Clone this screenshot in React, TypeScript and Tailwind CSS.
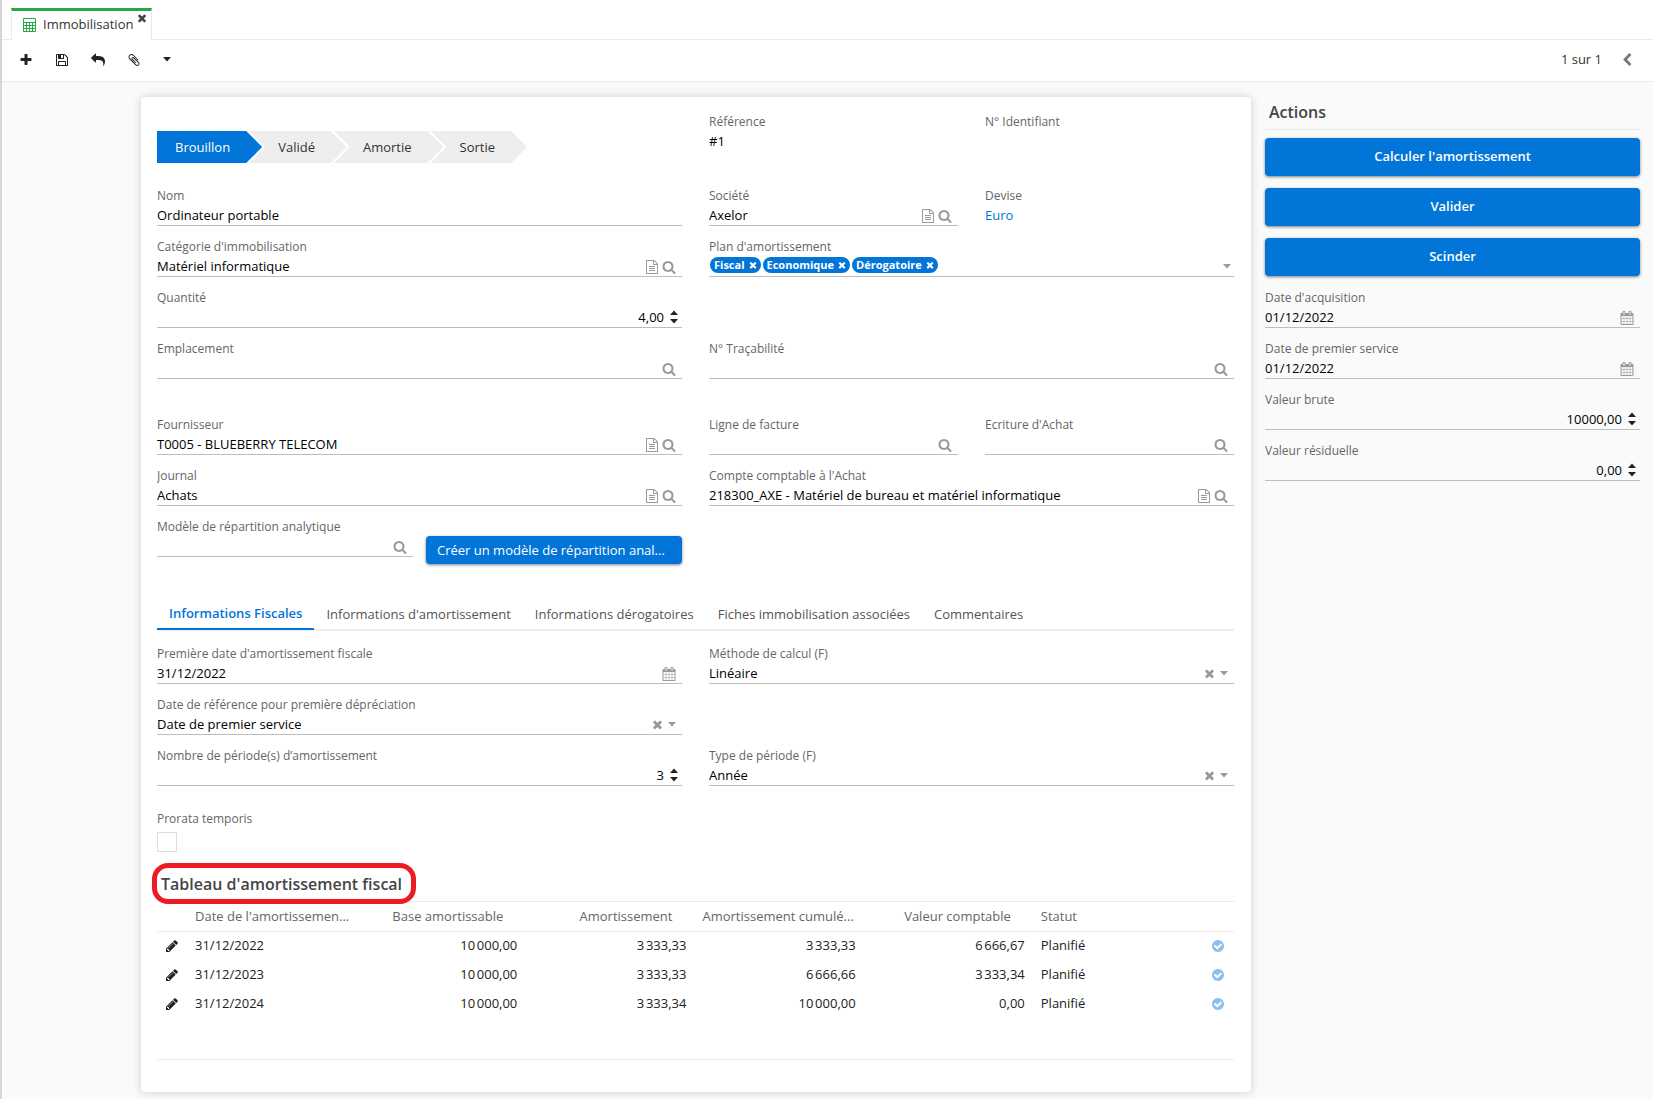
import { useId, useState, type ReactNode } from "react";

const PATHS = {
  plus: "M1600 736v192q0 40-28 68t-68 28h-416v416q0 40-28 68t-68 28h-192q-40 0-68-28t-28-68v-416h-416q-40 0-68-28t-28-68v-192q0-40 28-68t68-28h416v-416q0-40 28-68t68-28h192q40 0 68 28t28 68v416h416q40 0 68 28t28 68z",
  save: "M512 1536h768v-384h-768v384zm896 0h128v-896q0-14-10-38.5t-20-34.5l-281-281q-10-10-34-20t-39-10v416q0 40-28 68t-68 28h-576q-40 0-68-28t-28-68v-416h-128v1280h128v-416q0-40 28-68t68-28h832q40 0 68 28t28 68v416zm-384-928v-320q0-13-9.5-22.5t-22.5-9.5h-192q-13 0-22.5 9.5t-9.5 22.5v320q0 13 9.5 22.5t22.5 9.5h192q13 0 22.5-9.5t9.5-22.5zm640 32v928q0 40-28 68t-68 28h-1344q-40 0-68-28t-28-68v-1344q0-40 28-68t68-28h928q40 0 88 20t76 48l280 280q28 28 48 76t20 88z",
  reply: "M1792 1120q0 166-127 451-3 7-10.5 24t-13.5 30-13 22q-12 17-28 17-15 0-23.5-10t-8.5-25q0-9 2.5-26.5t2.5-23.5q5-68 5-123 0-101-17.5-181t-48.5-138.5-80-101-105.5-69.5-133-42.5-154-21.5-175.5-6h-224v256q0 26-19 45t-45 19-45-19l-512-512q-19-19-19-45t19-45l512-512q19-19 45-19t45 19 19 45v256h224q713 0 875 403 53 134 53 333z",
  clip: "M1596 1385q0 117-79 196t-196 79q-135 0-235-100l-777-776q-113-115-113-271 0-159 110-270t269-111q158 0 273 113l605 606q10 10 10 22 0 16-30.5 46.5t-46.5 30.5q-13 0-23-10l-606-607q-79-77-181-77-106 0-179 75t-73 181q0 105 76 181l776 777q63 63 145 63 64 0 106-42t42-106q0-82-63-145l-581-581q-26-24-60-24-29 0-48 19t-19 48q0 32 25 59l410 410q10 10 10 22 0 16-31 47t-47 31q-12 0-22-10l-410-410q-63-61-63-149 0-82 57-139t139-57q88 0 149 63l581 581q100 98 100 235z",
  times: "M1490 1322q0 40-28 68l-136 136q-28 28-68 28t-68-28l-294-294-294 294q-28 28-68 28t-68-28l-136-136q-28-28-28-68t28-68l294-294-294-294q-28-28-28-68t28-68l136-136q28-28 68-28t68 28l294 294 294-294q28-28 68-28t68 28l136 136q28 28 28 68t-28 68l-294 294 294 294q28 28 28 68z",
  search: "M1216 832q0-185-131.5-316.5t-316.5-131.5-316.5 131.5-131.5 316.5 131.5 316.5 316.5 131.5 316.5-131.5 131.5-316.5zm512 832q0 52-38 90t-90 38q-54 0-90-38l-343-342q-179 124-399 124-143 0-273.5-55.5t-225-150-150-225-55.5-273.5 55.5-273.5 150-225 225-150 273.5-55.5 273.5 55.5 225 150 150 225 55.5 273.5q0 220-124 399l343 343q37 37 37 90z",
  file: "M1596 380q28 28 48 76t20 88v1152q0 40-28 68t-68 28h-1344q-40 0-68-28t-28-68v-1600q0-40 28-68t68-28h896q40 0 88 20t76 48zm-444-244v376h376q-10-29-22-41l-313-313q-12-12-41-22zm384 1528v-1024h-416q-40 0-68-28t-28-68v-416h-768v1536h1280zm-1024-864q0-14 9-23t23-9h704q14 0 23 9t9 23v64q0 14-9 23t-23 9h-704q-14 0-23-9t-9-23v-64zm736 224q14 0 23 9t9 23v64q0 14-9 23t-23 9h-704q-14 0-23-9t-9-23v-64q0-14 9-23t23-9h704zm0 256q14 0 23 9t9 23v64q0 14-9 23t-23 9h-704q-14 0-23-9t-9-23v-64q0-14 9-23t23-9h704z",
  calendar: "M192 1664h288v-288h-288v288zm352 0h320v-288h-320v288zm-352-352h288v-320h-288v320zm352 0h320v-320h-320v320zm-352-384h288v-288h-288v288zm736 736h320v-288h-320v288zm-384-736h320v-288h-320v288zm768 736h288v-288h-288v288zm-384-352h320v-320h-320v320zm-352-864v-288q0-13-9.5-22.5t-22.5-9.5h-64q-13 0-22.5 9.5t-9.5 22.5v288q0 13 9.5 22.5t22.5 9.5h64q13 0 22.5-9.5t9.5-22.5zm736 864h288v-320h-288v320zm-384-384h320v-288h-320v288zm384 0h288v-288h-288v288zm32-480v-288q0-13-9.5-22.5t-22.5-9.5h-64q-13 0-22.5 9.5t-9.5 22.5v288q0 13 9.5 22.5t22.5 9.5h64q13 0 22.5-9.5t9.5-22.5zm384-64v1280q0 52-38 90t-90 38h-1408q-52 0-90-38t-38-90v-1280q0-52 38-90t90-38h128v-96q0-66 47-113t113-47h64q66 0 113 47t47 113v96h384v-96q0-66 47-113t113-47h64q66 0 113 47t47 113v96h128q52 0 90 38t38 90z",
  pencil: "M491 1536l91-91-235-235-91 91v107h128v128h107zm523-928q0-22-22-22-10 0-17 7l-542 542q-7 7-7 17 0 22 22 22 10 0 17-7l542-542q7-7 7-17zm-54-192l416 416-832 832h-416v-416zm683 96q0 53-37 90l-166 166-416-416 166-165q36-38 90-38 53 0 91 38l235 234q37 39 37 91z",
  check: "M1412 734q0-28-18-46l-91-90q-19-19-45-19t-45 19l-408 407-226-226q-19-19-45-19t-45 19l-91 90q-18 18-18 46 0 27 18 45l362 362q19 19 45 19 27 0 46-19l543-543q18-18 18-45zm252 162q0 209-103 385.5t-279.5 279.5-385.5 103-385.5-103-279.5-279.5-103-385.5 103-385.5 279.5-279.5 385.5-103 385.5 103 279.5 279.5 103 385.5z",
  chevron: "M1427 301l-531 531 531 531q19 19 19 45t-19 45l-166 166q-19 19-45 19t-45-19l-742-742q-19-19-19-45t19-45l742-742q19-19 45-19t45 19l166 166q19 19 19 45t-19 45z",
};

function Icon({ name, className = "size-[14px]" }: { name: keyof typeof PATHS; className?: string }) {
  return (
    <svg viewBox="0 0 1792 1792" fill="currentColor" aria-hidden="true" className={`shrink-0 ${className}`}>
      <path d={PATHS[name]} />
    </svg>
  );
}

function Caret() {
  return (
    <svg viewBox="0 0 8 5" fill="currentColor" aria-hidden="true" className="h-[5px] w-2 shrink-0">
      <path d="M0 0h8L4 4.5z" />
    </svg>
  );
}

function CalculatorIcon() {
  return (
    <svg viewBox="0 0 13 14" fill="none" stroke="currentColor" aria-hidden="true" className="h-[14px] w-[13px] shrink-0">
      <path d="M.5.5h12v13H.5zM.5 4.5h12M.5 7.5h12M.5 10.5h12M3.5 4.5v9M6.5 4.5v9M9.5 4.5v9" />
    </svg>
  );
}

function IconButton({ label, children }: { label: string; children: ReactNode }) {
  return (
    <button type="button" aria-label={label} className="flex items-center">
      {children}
    </button>
  );
}

function Field({ label, id, line = true, children }: { label: string; id?: string; line?: boolean; children?: ReactNode }) {
  return (
    <div className={`h-10 min-w-0 border-b ${line ? "border-[#bdbdbd]" : "border-transparent"}`}>
      <label htmlFor={id} className="block h-5 truncate text-[12px] leading-5 text-[#666]">
        {label}
      </label>
      <div className="flex h-[18px] items-center text-[13px] leading-[18px] text-black">{children}</div>
    </div>
  );
}

const INPUT = "h-[18px] w-full min-w-0 flex-1 bg-transparent leading-[18px] outline-none";

function TextField({ label, value = "" }: { label: string; value?: string }) {
  const id = useId();
  return (
    <Field label={label} id={id}>
      <input id={id} type="text" defaultValue={value} className={INPUT} />
    </Field>
  );
}

function LookupField({ label, value = "" }: { label: string; value?: string }) {
  const id = useId();
  return (
    <Field label={label} id={id}>
      <input id={id} type="text" defaultValue={value} className={INPUT} />
      <div className="flex gap-[3px] pr-1.5 pt-px text-[#999]">
        {value && (
          <IconButton label={`Ouvrir ${label}`}>
            <Icon name="file" />
          </IconButton>
        )}
        <IconButton label={`Rechercher ${label}`}>
          <Icon name="search" />
        </IconButton>
      </div>
    </Field>
  );
}

function DateField({ label, value }: { label: string; value: string }) {
  const id = useId();
  return (
    <Field label={label} id={id}>
      <input id={id} type="text" defaultValue={value} className={INPUT} />
      <div className="flex pr-1.5 pt-px text-[#999]">
        <IconButton label={`Calendrier ${label}`}>
          <Icon name="calendar" />
        </IconButton>
      </div>
    </Field>
  );
}

function NumberField({ label, value }: { label: string; value: string }) {
  const id = useId();
  return (
    <Field label={label} id={id}>
      <input id={id} type="text" inputMode="decimal" defaultValue={value} className={`${INPUT} text-right`} />
      <div className="flex flex-col gap-1 pl-1.5 pr-1 text-[#222]">
        <button type="button" aria-label={`Augmenter ${label}`} className="rotate-180">
          <Caret />
        </button>
        <button type="button" aria-label={`Diminuer ${label}`}>
          <Caret />
        </button>
      </div>
    </Field>
  );
}

function SelectField({ label, value }: { label: string; value: string }) {
  const id = useId();
  return (
    <Field label={label} id={id}>
      <select id={id} defaultValue={value} className={`${INPUT} appearance-none`}>
        <option>{value}</option>
      </select>
      <div className="flex items-center gap-1 pr-1.5 text-[#999]">
        <IconButton label={`Effacer ${label}`}>
          <Icon name="times" className="size-[13px]" />
        </IconButton>
        <Caret />
      </div>
    </Field>
  );
}

function Steps() {
  return (
    <ol className="flex text-[13px] leading-8 text-[#333]">
      <li className="bg-[#0275d8] pl-[18px] pr-8 text-white [clip-path:polygon(0_0,calc(100%-16px)_0,100%_50%,calc(100%-16px)_100%,0_100%)]">
        Brouillon
      </li>
      {["Validé", "Amortie", "Sortie"].map((step) => (
        <li
          key={step}
          className="-ml-[13px] bg-[#eee] pl-[29px] pr-8 [clip-path:polygon(0_0,calc(100%-16px)_0,100%_50%,calc(100%-16px)_100%,0_100%,16px_50%)]"
        >
          {step}
        </li>
      ))}
    </ol>
  );
}

function Tags() {
  return (
    <Field label="Plan d'amortissement">
      <ul className="flex flex-1 gap-0.5 pb-0.5 pl-px">
        {["Fiscal", "Economique", "Dérogatoire"].map((tag) => (
          <li
            key={tag}
            className="flex h-4 items-center gap-[3px] rounded-full bg-[#0275d8] pl-1 pr-[3px] text-[11px] font-bold leading-4 text-white"
          >
            {tag}
            <button type="button" aria-label={`Retirer ${tag}`}>
              <Icon name="times" className="size-[10px]" />
            </button>
          </li>
        ))}
      </ul>
      <button type="button" aria-label="Choisir un plan" className="pr-[3px] text-[#999]">
        <Caret />
      </button>
    </Field>
  );
}

const TABS = [
  "Informations Fiscales",
  "Informations d'amortissement",
  "Informations dérogatoires",
  "Fiches immobilisation associées",
  "Commentaires",
];

const ROWS = [
  ["31/12/2022", "10\u202f000,00", "3\u202f333,33", "3\u202f333,33", "6\u202f666,67"],
  ["31/12/2023", "10\u202f000,00", "3\u202f333,33", "6\u202f666,66", "3\u202f333,34"],
  ["31/12/2024", "10\u202f000,00", "3\u202f333,34", "10\u202f000,00", "0,00"],
];

function DepreciationTable() {
  const numHead = "truncate pl-2 pr-[22px] text-right font-normal";
  return (
    <div className="h-[159px] border-y border-[#eaeaea]">
      <table className="w-full table-fixed border-collapse text-[13px] text-[#222]">
        <colgroup>
          <col className="w-[30px]" />
          <col />
          <col />
          <col />
          <col />
          <col />
          <col />
          <col className="w-8" />
        </colgroup>
        <thead>
          <tr className="h-[29px] border-b border-[#eaeaea] text-[#666]">
            <td />
            <th scope="col" className="whitespace-nowrap px-2 text-left font-normal">Date de l'amortissemen...</th>
            <th scope="col" className={numHead}>Base amortissable</th>
            <th scope="col" className={numHead}>Amortissement</th>
            <th scope="col" className="whitespace-nowrap px-2 text-left font-normal">Amortissement cumulé...</th>
            <th scope="col" className={numHead}>Valeur comptable</th>
            <th scope="col" className="px-2 text-left font-normal">Statut</th>
            <td />
          </tr>
        </thead>
        <tbody>
          {ROWS.map(([date, ...amounts]) => (
            <tr key={date} className="h-[29px]">
              <td className="pl-2">
                <button type="button" aria-label={`Modifier ${date}`} className="block text-[#222]">
                  <Icon name="pencil" />
                </button>
              </td>
              <td className="px-2">{date}</td>
              {amounts.map((amount, i) => (
                <td key={i} className="px-2 text-right">{amount}</td>
              ))}
              <td className="px-2">Planifié</td>
              <td className="pl-[9px]">
                <button type="button" aria-label={`Réaliser ${date}`} className="block text-[#8dbfee]">
                  <Icon name="check" />
                </button>
              </td>
            </tr>
          ))}
        </tbody>
      </table>
    </div>
  );
}

const PAIR = "grid grid-cols-2 gap-x-[27px]";
const FORM = `${PAIR} gap-y-[11px]`;

export default function App() {
  const [tab, setTab] = useState(TABS[0]);
  const prorataId = useId();
  return (
    <div className="flex min-h-screen flex-col border-l-2 border-[#d6d6d6] bg-[#fafafa] font-['Open_Sans',sans-serif] text-[13px] text-[#333]">
      <nav className="flex h-10 items-end border-b border-[#eaeaea] bg-white pl-[9px]">
        <div className="-mb-px flex h-8 gap-[3px] border-x border-t-[3px] border-x-[#eaeaea] border-t-[#28a745] bg-white pl-[11px] pr-[3px]">
          <a href="#immobilisation" className="flex items-center gap-[7px] pb-0.5 text-[13px]">
            <span className="text-[#28a745]">
              <CalculatorIcon />
            </span>
            Immobilisation
          </a>
          <button type="button" aria-label="Fermer l'onglet" className="self-start pt-px text-[#444]">
            <Icon name="times" className="size-3" />
          </button>
        </div>
      </nav>

      <header className="flex h-[42px] items-center justify-between border-b border-[#eaeaea] bg-white pb-0.5 pl-[17px] pr-[19px]">
        <div className="flex items-center gap-[22px] text-[#222]">
          <IconButton label="Nouveau"><Icon name="plus" /></IconButton>
          <IconButton label="Enregistrer"><Icon name="save" /></IconButton>
          <IconButton label="Annuler"><Icon name="reply" /></IconButton>
          <IconButton label="Joindre"><Icon name="clip" /></IconButton>
          <IconButton label="Plus d'actions"><Caret /></IconButton>
        </div>
        <div className="flex items-center gap-[18px]">
          <span>1 sur 1</span>
          <span className="text-[#777]">
            <IconButton label="Précédent"><Icon name="chevron" /></IconButton>
          </span>
        </div>
      </header>

      <div className="flex items-start gap-[14px] pb-[7px] pl-[139px] pr-[13px] pt-[15px]">
        <main className="min-w-0 flex-1 rounded bg-white pb-8 pl-4 pr-[17px] pt-[15px] shadow-[0_0_10px_rgba(0,0,0,0.18)]">
          <div className={`${PAIR} h-[74px]`}>
            <div className="pt-[19px]">
              <Steps />
            </div>
            <div className={PAIR}>
              <Field label="Référence" line={false}>#1</Field>
              <Field label="N° Identifiant" line={false} />
            </div>
          </div>

          <div className={FORM}>
            <TextField label="Nom" value="Ordinateur portable" />
            <div className={PAIR}>
              <LookupField label="Société" value="Axelor" />
              <Field label="Devise" line={false}>
                <a href="#euro" className="text-[#0275d8]">Euro</a>
              </Field>
            </div>
            <LookupField label="Catégorie d'immobilisation" value="Matériel informatique" />
            <Tags />
            <NumberField label="Quantité" value="4,00" />
            <div />
            <LookupField label="Emplacement" />
            <LookupField label="N° Traçabilité" />
          </div>

          <div className={`${FORM} mt-9`}>
            <LookupField label="Fournisseur" value="T0005 - BLUEBERRY TELECOM" />
            <div className={PAIR}>
              <LookupField label="Ligne de facture" />
              <LookupField label="Ecriture d'Achat" />
            </div>
            <LookupField label="Journal" value="Achats" />
            <LookupField label="Compte comptable à l'Achat" value="218300_AXE - Matériel de bureau et matériel informatique" />
            <div className="grid grid-cols-2 gap-[13px]">
              <LookupField label="Modèle de répartition analytique" />
              <div className="min-w-0 pt-[19px]">
                <button
                  type="button"
                  className="block h-7 w-full truncate rounded-sm bg-[#0275d8] px-[11px] text-left text-[13px] leading-[26px] text-white shadow-[0_1px_3px_rgba(0,0,0,0.5)]"
                >
                  Créer un modèle de répartition anal...
                </button>
              </div>
            </div>
          </div>

          <div role="tablist" className="mt-9 flex border-b-2 border-[#eee]">
            {TABS.map((name) => (
              <button
                key={name}
                type="button"
                role="tab"
                aria-selected={tab === name}
                onClick={() => setTab(name)}
                className={
                  tab === name
                    ? "-mb-px h-[30px] whitespace-nowrap border-b-2 border-[#0275d8] px-3 font-semibold text-[#0275d8]"
                    : "h-[29px] whitespace-nowrap px-3 text-[#555]"
                }
              >
                {name}
              </button>
            ))}
          </div>

          <div className={`${FORM} mt-[13px]`}>
            <DateField label="Première date d'amortissement fiscale" value="31/12/2022" />
            <SelectField label="Méthode de calcul (F)" value="Linéaire" />
            <SelectField label="Date de référence pour première dépréciation" value="Date de premier service" />
            <div />
            <NumberField label="Nombre de période(s) d’amortissement" value="3" />
            <SelectField label="Type de période (F)" value="Année" />
          </div>

          <div className="mt-[23px]">
            <label htmlFor={prorataId} className="block text-[12px] leading-5 text-[#666]">
              Prorata temporis
            </label>
            <input
              id={prorataId}
              type="checkbox"
              className="mt-[3px] block size-5 appearance-none border border-[#ddd] bg-white checked:bg-[#0275d8]"
            />
          </div>

          <h2 className="relative mt-[18px] w-fit pb-[3px] pl-1 text-[16px] font-semibold leading-7 text-[#444]">
            Tableau d'amortissement fiscal
            <span aria-hidden="true" className="absolute -bottom-[3px] -left-[5px] -right-[14px] -top-[7px] rounded-2xl border-[5px] border-[#ed1c24]" />
          </h2>
          <DepreciationTable />
        </main>

        <aside className="w-[375px] shrink-0">
          <h2 className="border-b border-[#eaeaea] px-1 pb-[3px] pt-px text-[16px] font-semibold leading-7 text-[#444]">Actions</h2>
          <div className="mt-2 flex flex-col gap-3">
            {["Calculer l'amortissement", "Valider", "Scinder"].map((action) => (
              <button
                key={action}
                type="button"
                className="h-[38px] rounded-sm bg-[#0275d8] text-[13px] font-semibold text-white shadow-[0_1px_3px_rgba(0,0,0,0.5)]"
              >
                {action}
              </button>
            ))}
          </div>
          <div className="mt-3 grid gap-[11px]">
            <DateField label="Date d'acquisition" value="01/12/2022" />
            <DateField label="Date de premier service" value="01/12/2022" />
            <NumberField label="Valeur brute" value="10000,00" />
            <NumberField label="Valeur résiduelle" value="0,00" />
          </div>
        </aside>
      </div>
    </div>
  );
}
